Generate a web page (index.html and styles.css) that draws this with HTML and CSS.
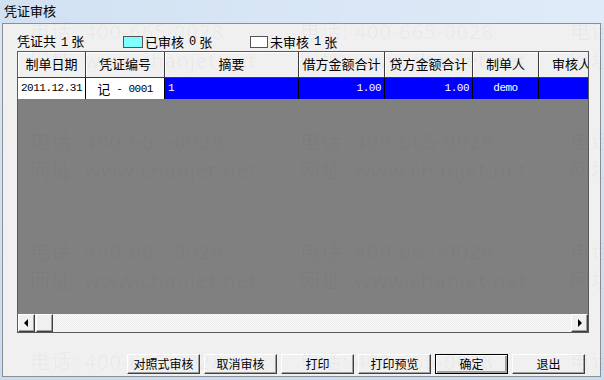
FILE: index.html
```html
<!DOCTYPE html>
<html lang="zh">
<head>
<meta charset="utf-8">
<title>凭证审核</title>
<link rel="stylesheet" href="styles.css">
</head>
<body>
<div class="frame">
  <div class="titlebar">凭证审核</div>
  <div class="client">
    <div class="summary">
      <span class="sum-total">凭证共<span class="num">1</span>张</span>
      <span class="legend legend-audited"><i class="swatch swatch-cyan"></i>已审核<span class="num">0</span>张</span>
      <span class="legend"><i class="swatch swatch-white"></i>未审核<span class="num">1</span>张</span>
    </div>
    <div class="grid">
      <div class="row head">
        <div class="cell c1">制单日期</div>
        <div class="cell c2">凭证编号</div>
        <div class="cell c3">摘要</div>
        <div class="cell c4">借方金额合计</div>
        <div class="cell c5">贷方金额合计</div>
        <div class="cell c6">制单人</div>
        <div class="cell c7">审核人</div>
      </div>
      <div class="row data">
        <div class="cell c1 mono center">2011.12.31</div>
        <div class="cell c2 voucher"><span class="cjk">记</span><span class="mono"> - 0001</span></div>
        <div class="cell c3 sel left mono">1</div>
        <div class="cell c4 sel right mono">1.00</div>
        <div class="cell c5 sel right mono">1.00</div>
        <div class="cell c6 sel center mono">demo</div>
        <div class="cell c7 sel"></div>
      </div>
      <div class="empty"></div>
      <div class="hscroll">
        <div class="sbtn"><i class="tri tri-left"></i></div>
        <div class="sbtn thumb"></div>
        <div class="track"></div>
        <div class="sbtn"><i class="tri tri-right"></i></div>
      </div>
    </div>
    <div class="buttons">
      <button class="btn">对照式审核</button>
      <button class="btn">取消审核</button>
      <button class="btn">打印</button>
      <button class="btn">打印预览</button>
      <button class="btn btn-default">确定</button>
      <button class="btn">退出</button>
    </div>
  </div>
  <div class="watermark" aria-hidden="true">
    <div class="wm"><span>电话: 400-665-0028</span><span>网址: www.chanjet.net</span></div>
    <div class="wm"><span>电话: 400-665-0028</span><span>网址: www.chanjet.net</span></div>
    <div class="wm"><span>电话: 400-665-0028</span><span>网址: www.chanjet.net</span></div>
    <div class="wm"><span>电话: 400-665-0028</span><span>网址: www.chanjet.net</span></div>
    <div class="wm"><span>电话: 400-665-0028</span><span>网址: www.chanjet.net</span></div>
    <div class="wm"><span>电话: 400-665-0028</span><span>网址: www.chanjet.net</span></div>
    <div class="wm"><span>电话: 400-665-0028</span><span>网址: www.chanjet.net</span></div>
    <div class="wm"><span>电话: 400-665-0028</span><span>网址: www.chanjet.net</span></div>
    <div class="wm"><span>电话: 400-665-0028</span><span>网址: www.chanjet.net</span></div>
    <div class="wm"><span>电话: 400-665-0028</span><span>网址: www.chanjet.net</span></div>
    <div class="wm"><span>电话: 400-665-0028</span><span>网址: www.chanjet.net</span></div>
    <div class="wm"><span>电话: 400-665-0028</span><span>网址: www.chanjet.net</span></div>
  </div>
</div>
</body>
</html>
```
FILE: styles.css
```css
* { box-sizing: border-box; }
html, body { margin: 0; padding: 0; }
body {
  width: 604px;
  height: 380px;
  overflow: hidden;
  font-family: "Noto Sans CJK SC", "Noto Sans", sans-serif;
  color: #000;
  background: linear-gradient(180deg, #dbe7f5 0%, #d3e2f2 40%, #c9dbef 100%);
}
.frame {
  position: relative;
  width: 604px;
  height: 380px;
  overflow: hidden;
}
.titlebar {
  height: 23px;
  padding: 2px 0 0 4px;
  font-size: 13px;
  line-height: 17px;
  background: linear-gradient(90deg, #d2e1f2 0%, #d9e7f6 60%, #dfebf8 100%);
}
.client {
  margin-left: 2px;
  width: 599px;
  height: 354px;
  border: 1px solid #8b9097;
  background: #f0f0f0;
  padding: 9px 0 0 14px;
  display: flex;
  flex-direction: column;
}
.summary {
  height: 17px;
  display: flex;
  align-items: center;
  font-size: 13px;
  line-height: 16px;
  white-space: nowrap;
}
.num {
  font-family: "Liberation Mono", monospace;
  font-size: 12px;
  margin: 0 3px 0 5px;
}
.sum-total { width: 106px; }
.legend { display: flex; align-items: center; }
.legend-audited { width: 127px; }
.swatch {
  display: inline-block;
  height: 12px;
  border: 1px solid #555;
  margin-right: 2px;
}
.swatch-cyan { width: 20px; background: #80ffff; }
.swatch-white { width: 18px; background: #fff; }

.grid {
  margin-top: 1px;
  width: 572px;
  border: 1px solid #5a5a5a;
  overflow: hidden;
  display: flex;
  flex-direction: column;
}
.row { display: flex; flex: none; }
.cell {
  flex: none;
  overflow: hidden;
  white-space: pre;
  border-right: 1px solid #000;
}
.head { height: 26px; }
.head .cell {
  height: 26px;
  background: #f0f0f0;
  border-bottom: 1px solid #3c3c3c;
  border-right-color: #3c3c3c;
  box-shadow: inset 1px 1px 0 #fff;
  font-size: 13px;
  line-height: 24px;
  text-align: center;
}
.c1 { width: 68px; }
.c2 { width: 79px; }
.c3 { width: 134px; }
.c4 { width: 86px; }
.c5 { width: 88px; }
.c6 { width: 66px; }
.c7 { width: 66px; }
.data { height: 21px; }
.data .cell {
  height: 21px;
  background: #fff;
  font-size: 11px;
  letter-spacing: -0.5px;
  line-height: 21px;
  padding: 0 3px;
}
.data .c1 { padding: 0; }
.data .voucher {
  display: flex;
  align-items: center;
  justify-content: center;
  padding: 0;
}
.mono { font-family: "Liberation Mono", monospace; }
.cjk { font-family: "Noto Sans CJK SC", sans-serif; font-size: 13px; line-height: 16px; letter-spacing: 0; }
.voucher .mono { font-size: 11px; line-height: 16px; }
.center { text-align: center; }
.left { text-align: left; }
.right { text-align: right; }
.data .sel { background: #0000ff; color: #fff; }
.empty {
  height: 215px;
  flex: none;
  background: #808080;
}
.hscroll {
  height: 18px;
  flex: none;
  display: flex;
  background-color: #f4f4f4;
  background-image: repeating-conic-gradient(#fbfbfb 0 25%, #ebebeb 0 50%);
  background-size: 2px 2px;
}
.sbtn {
  flex: none;
  width: 17px;
  height: 18px;
  background: #f0f0f0;
  border-top: 1px solid #fff;
  border-left: 1px solid #fff;
  border-right: 1px solid #404040;
  border-bottom: 1px solid #404040;
  box-shadow: inset -1px -1px 0 #a0a0a0;
  display: flex;
  align-items: center;
  justify-content: center;
}
.thumb { margin-left: 1px; }
.track { flex: 1; }
.tri { display: block; width: 0; height: 0; border-top: 4px solid transparent; border-bottom: 4px solid transparent; }
.tri-left { border-right: 4px solid #000; margin-right: 1px; }
.tri-right { border-left: 4px solid #000; margin-left: 1px; }

.buttons {
  margin-top: 21px;
  display: flex;
  gap: 4px;
  padding-left: 110px;
}
.btn {
  width: 73px;
  height: 20px;
  padding: 0;
  margin: 0;
  font-family: "Noto Sans CJK SC", sans-serif;
  font-size: 12px;
  line-height: 16px;
  color: #000;
  background: #f0f0f0;
  border-top: 1px solid #fff;
  border-left: 1px solid #fff;
  border-right: 1px solid #404040;
  border-bottom: 1px solid #404040;
  box-shadow: inset -1px -1px 0 #a0a0a0;
}
.btn-default {
  border: 1px solid #000;
  box-shadow: inset 1px 1px 0 #fff, inset -2px -2px 0 #a0a0a0;
}

.watermark {
  position: absolute;
  left: 30px;
  top: 17px;
  display: grid;
  grid-template-columns: repeat(3, 270px);
  grid-auto-rows: 110px;
  pointer-events: none;
  color: rgba(0, 0, 0, 0.035);
  font-family: "Noto Sans", "Noto Sans CJK SC", sans-serif;
  font-size: 20px;
  letter-spacing: 1px;
  line-height: 29px;
  white-space: nowrap;
}
.wm { display: flex; flex-direction: column; }
```
